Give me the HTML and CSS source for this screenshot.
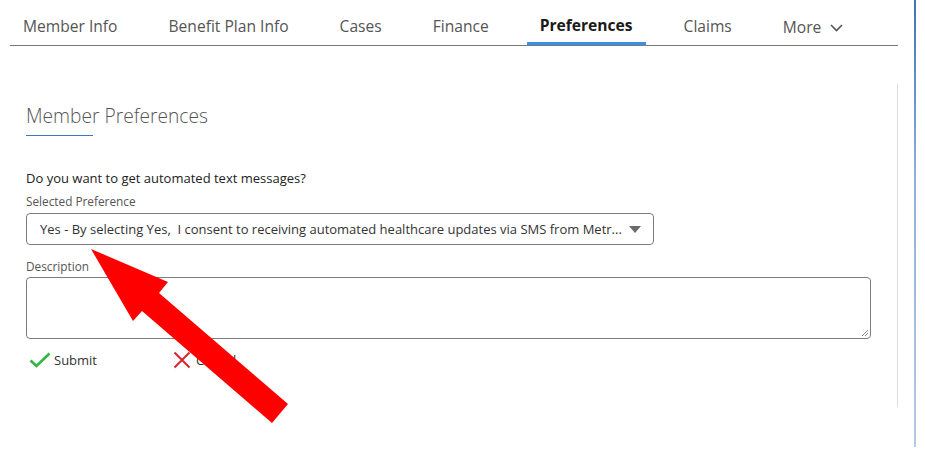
FILE: index.html
```html
<!DOCTYPE html>
<html>
<head>
<meta charset="utf-8">
<link rel="stylesheet" href="styles.css">
</head>
<body>
<div class="page">
  <div class="main">
    <nav class="tabs">
      <span class="tab">Member Info</span>
      <span class="tab">Benefit Plan Info</span>
      <span class="tab">Cases</span>
      <span class="tab">Finance</span>
      <span class="tab active">Preferences</span>
      <span class="tab">Claims</span>
      <span class="tab more">More
        <svg class="chev" width="13" height="8" viewBox="0 0 13 8"><path d="M1 1 L6.5 6.5 L12 1" fill="none" stroke="#555" stroke-width="1.6"/></svg>
      </span>
    </nav>
    <section class="panel">
      <h2 class="title">Member Preferences</h2>
      <p class="question">Do you want to get automated text messages?</p>
      <label class="label">Selected Preference</label>
      <div class="select">
        <span class="select-text">Yes - By selecting Yes,&nbsp; I consent to receiving automated healthcare updates via SMS from Metr...</span>
        <svg class="caret" width="12" height="7" viewBox="0 0 12 7"><path d="M0 0 H12 L6 7 Z" fill="#6b6b6b"/></svg>
      </div>
      <label class="label desc-label">Description</label>
      <div class="textarea">
        <svg class="grip" width="8" height="8" viewBox="0 0 8 8"><path d="M7 1 L1 7 M7 4 L4 7" stroke="#888" stroke-width="1"/></svg>
      </div>
      <div class="actions">
        <span class="btn">
          <svg width="22" height="16" viewBox="0 0 22 16"><path d="M1.5 8.5 L7.5 14 L20.5 1.5" fill="none" stroke="#2fb744" stroke-width="2.6"/></svg>
          <span>Submit</span>
        </span>
        <span class="btn cancel">
          <svg width="18" height="18" viewBox="0 0 18 18"><path d="M1.5 1.5 L16.5 16.5 M16.5 1.5 L1.5 16.5" stroke="#d9262c" stroke-width="2"/></svg>
          <span>Cancel</span>
        </span>
      </div>
    </section>
  </div>
  <div class="rightbar"></div>
</div>
<svg class="arrow" width="925" height="457" viewBox="0 0 925 457">
  <polygon points="91,249 168,282 159,293 288,404 272,423 142,311 133,321" fill="#ff0000"/>
</svg>
</body>
</html>
```
FILE: styles.css
```css
html, body {
  margin: 0;
  padding: 0;
  background: #fff;
}
body {
  font-family: "Open Sans", "Noto Sans", sans-serif;
  color: #333;
  width: 925px;
  height: 457px;
  overflow: hidden;
  position: relative;
}
.page {
  display: flex;
  align-items: flex-start;
}
.main {
  width: 898px;
}
.tabs {
  display: flex;
  align-items: flex-end;
  margin-left: 10px;
  height: 45px;
  border-bottom: 1px solid #7a7a7a;
  gap: 25px;
}
.tab {
  font-size: 15.6px;
  color: #555;
  padding: 0 13px;
  height: 44px;
  line-height: 50px;
  box-sizing: border-box;
  white-space: nowrap;
}
.tab.active {
  color: #1a1a1a;
  font-weight: 700;
  border-bottom: 3px solid #3b8fe6;
  line-height: 48px;
}
.tab.more {
  display: flex;
  align-items: center;
  gap: 9px;
  line-height: normal;
  padding-top: 8px;
}
.chev {
  margin-top: 2px;
}
.panel {
  margin-top: 38px;
  height: 323px;
  border-right: 1px solid #dcdcdc;
  padding-left: 26px;
  box-sizing: border-box;
}
.title {
  margin: 0;
  padding-top: 18px;
  font-size: 19.2px;
  font-weight: 300;
  color: #555;
  line-height: 28px;
  display: inline-block;
  position: relative;
}
.title::after {
  content: "";
  display: block;
  width: 67px;
  height: 1px;
  background: #3b78c0;
  margin-top: 5px;
}
.question {
  margin: 34px 0 0;
  font-size: 13px;
  color: #222;
  line-height: 16px;
}
.label {
  display: block;
  font-size: 11.8px;
  color: #555;
  margin-top: 7px;
  line-height: 16px;
}
.select {
  width: 628px;
  height: 32px;
  box-sizing: border-box;
  border: 1px solid #7d7d7d;
  border-radius: 4px;
  margin-top: 4px;
  display: flex;
  align-items: center;
  padding-left: 13px;
  padding-right: 12px;
}
.select-text {
  flex: 1;
  font-size: 13px;
  color: #333;
  white-space: nowrap;
  overflow: hidden;
}
.caret {
  margin-left: 6px;
}
.desc-label {
  margin-top: 13px;
}
.textarea {
  width: 845px;
  height: 62px;
  box-sizing: border-box;
  border: 1px solid #7d7d7d;
  border-radius: 4px;
  margin-top: 3px;
  position: relative;
}
.grip {
  position: absolute;
  right: 1px;
  bottom: 1px;
}
.actions {
  display: flex;
  align-items: center;
  margin-top: 12px;
  padding-left: 3px;
  gap: 76px;
}
.btn {
  display: flex;
  align-items: center;
  gap: 3px;
  font-size: 13px;
  color: #333;
}
.btn.cancel {
  gap: 5px;
}
.rightbar {
  margin-left: 16px;
  width: 2px;
  height: 447px;
  background: linear-gradient(#3f73b5, #8fb0da 40%, #b5c9e6);
}
.arrow {
  position: absolute;
  left: 0;
  top: 0;
  pointer-events: none;
}
```
